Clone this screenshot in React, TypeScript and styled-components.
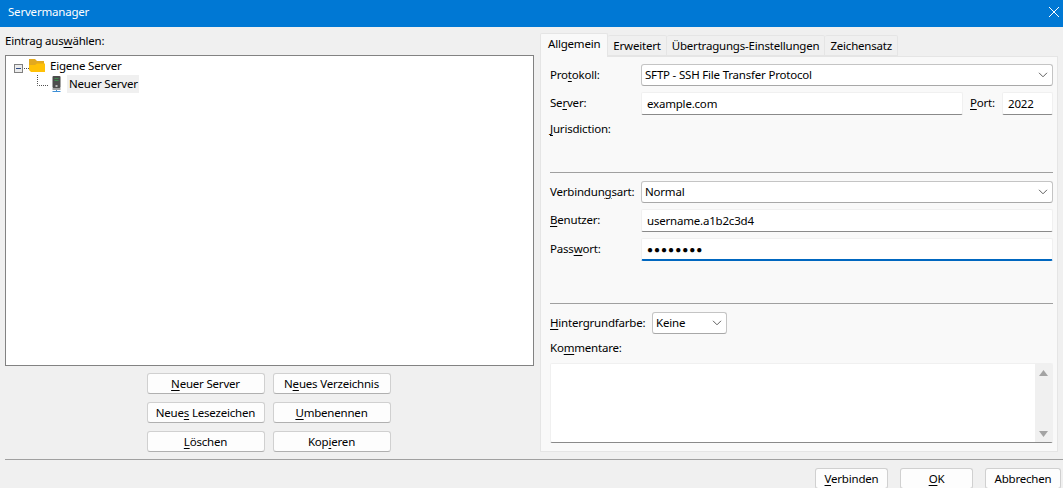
import React from 'react'
import styled, { createGlobalStyle } from 'styled-components'

const GlobalStyle = createGlobalStyle`
  html, body {
    margin: 0;
    padding: 0;
    background: #f0f0f0;
  }
  body {
    font-family: "Noto Sans", "Open Sans", "Liberation Sans", sans-serif;
    font-size: 11.5px;
    letter-spacing: -0.2px;
    color: #000;
  }
`

const Window = styled.div`
  width: 1063px;
  height: 488px;
  overflow: hidden;
  display: flex;
  flex-direction: column;
  background: #f0f0f0;
`

const TitleBar = styled.div`
  flex: none;
  height: 27px;
  box-sizing: border-box;
  background: #0078d4;
  color: #fff;
  display: flex;
  align-items: center;
  justify-content: space-between;
  padding: 0 3px 4px 8px;
`

const Main = styled.div`
  flex: none;
  height: 432px;
  display: flex;
  padding-left: 5px;
`

const LeftColumn = styled.div`
  width: 529px;
  display: flex;
  flex-direction: column;
`

const TopLabel = styled.div`
  height: 28px;
  line-height: 28px;
`

const Tree = styled.div`
  height: 311px;
  box-sizing: border-box;
  border: 1px solid #828282;
  background: #fff;
  padding: 1px 0 0 8px;
`

const TreeRow = styled.div<{ $indent?: number }>`
  display: flex;
  align-items: center;
  height: 18px;
  padding-left: ${p => p.$indent ?? 0}px;
`

const TreeText = styled.span<{ $selected?: boolean }>`
  padding: 0 1px 0 2px;
  margin-left: ${p => (p.$selected ? 5 : 2)}px;
  height: 18px;
  line-height: 18px;
  background: ${p => (p.$selected ? '#f0f0f0' : 'transparent')};
`

const ButtonGrid = styled.div`
  display: grid;
  grid-template-columns: 118px 118px;
  grid-auto-rows: 21px;
  gap: 8px;
  justify-content: center;
  margin-top: 7px;
  padding-right: 2px;
`

const Button = styled.div<{ $width?: number }>`
  box-sizing: border-box;
  width: ${p => (p.$width ? `${p.$width}px` : 'auto')};
  height: 21px;
  background: #fdfdfd;
  border: 1px solid #d0d0d0;
  border-bottom-color: #b0b0b0;
  border-radius: 3px;
  display: flex;
  align-items: center;
  justify-content: center;
  white-space: nowrap;
`

const RightColumn = styled.div`
  width: 518px;
  margin-left: 6px;
  display: flex;
  flex-direction: column;
  padding-top: 6px;
`

const TabBar = styled.div`
  display: flex;
  align-items: flex-end;
  height: 23px;
`

const Tab = styled.div<{ $active?: boolean }>`
  box-sizing: border-box;
  height: ${p => (p.$active ? 24 : 21)}px;
  margin-bottom: ${p => (p.$active ? -1 : 0)}px;
  padding: 0 ${p => (p.$active ? 7 : 5)}px ${p => (p.$active ? 4 : 0)}px;
  display: flex;
  align-items: center;
  white-space: nowrap;
  position: relative;
  background: ${p => (p.$active ? '#f9f9f9' : '#f0f0f0')};
  border: 1px solid #e5e5e5;
  border-bottom: ${p => (p.$active ? 'none' : '1px solid #e5e5e5')};
  border-left-width: ${p => (p.$active ? 1 : 0)}px;
  border-radius: 2px 2px 0 0;
`

const TabPanel = styled.div`
  height: 396px;
  box-sizing: border-box;
  background: #f9f9f9;
  border: 1px solid #e5e5e5;
  padding: 7px 4px 0 9px;
  display: flex;
  flex-direction: column;
`

const FormRow = styled.div<{ $top?: number }>`
  display: flex;
  align-items: center;
  margin-top: ${p => p.$top ?? 0}px;
`

const FieldLabel = styled.div<{ $width?: number }>`
  flex: none;
  box-sizing: border-box;
  width: ${p => p.$width ?? 91}px;
  padding-bottom: 2px;
  white-space: nowrap;
`

const Select = styled.div<{ $width?: number }>`
  box-sizing: border-box;
  flex: ${p => (p.$width ? 'none' : '1')};
  width: ${p => (p.$width ? `${p.$width}px` : 'auto')};
  height: 22px;
  background: #fff;
  border: 1px solid #c4c4c4;
  border-bottom-color: #a8a8a8;
  border-radius: 3px;
  display: flex;
  align-items: center;
  justify-content: space-between;
  padding: 0 4px 1px 3px;
`

const Input = styled.div<{ $width?: number; $focused?: boolean }>`
  box-sizing: border-box;
  flex: ${p => (p.$width ? 'none' : '1')};
  width: ${p => (p.$width ? `${p.$width}px` : 'auto')};
  height: 23px;
  background: #fff;
  border: 1px solid #f0f0f0;
  border-bottom: ${p => (p.$focused ? '2px solid #0067c0' : '1px solid #8a8a8a')};
  border-radius: 2px;
  display: flex;
  align-items: center;
  padding: 0 5px 1px;
`

const Dots = styled.span`
  font-size: 10px;
  letter-spacing: 1px;
`

const PortLabel = styled.div`
  flex: none;
  width: 39px;
  padding: 0 0 2px 7px;
  box-sizing: border-box;
`

const Divider = styled.div<{ $top: number }>`
  flex: none;
  height: 1px;
  background: #a0a0a0;
  margin-top: ${p => p.$top}px;
`

const PlainLabel = styled.div<{ $top: number }>`
  margin-top: ${p => p.$top}px;
  height: 16px;
  line-height: 16px;
`

const Comments = styled.div`
  margin-top: 7px;
  height: 80px;
  box-sizing: border-box;
  background: #fff;
  border: 1px solid #f0f0f0;
  border-bottom: 1px solid #8a8a8a;
  border-radius: 2px;
  display: flex;
  justify-content: flex-end;
  padding: 0;
`

const ScrollTrack = styled.div`
  width: 17px;
  background: #f0f0f0;
  display: flex;
  flex-direction: column;
  justify-content: space-between;
  align-items: center;
  padding: 6px 0 5px;
  box-sizing: border-box;
`

const BottomLine = styled.div`
  flex: none;
  height: 1px;
  margin-left: 5px;
  background: #a0a0a0;
`

const Footer = styled.div`
  flex: none;
  display: flex;
  justify-content: flex-end;
  gap: 12px;
  padding: 8px 2px 0 0;
`

const Mn = styled.span`
  text-decoration: underline;
  text-underline-offset: 2px;
`

const Chevron = () => (
  <svg width="10" height="6" viewBox="0 0 10 6" fill="none" stroke="#606060" strokeWidth="1">
    <path d="M1 0.8 L5 4.8 L9 0.8" />
  </svg>
)

const CloseIcon = () => (
  <svg width="12" height="12" viewBox="0 0 12 12" fill="none" stroke="#fff" strokeWidth="1">
    <path d="M1 1 L11 11 M11 1 L1 11" />
  </svg>
)

const Expander = () => (
  <svg width="15" height="18" viewBox="0 0 15 18">
    <rect x="0.5" y="7.5" width="8" height="8" fill="#ececec" stroke="#808080" />
    <path d="M2 11.5 H7" stroke="#2f4c86" />
    <path d="M10 11.5 H15" stroke="#505050" strokeDasharray="1 1" />
  </svg>
)

const FolderIcon = () => (
  <svg width="17" height="18" viewBox="0 0 17 18">
    <path d="M0 2 H6 L8 4 H15 V9 H0 Z" fill="#e2a91f" />
    <path d="M0 8 H6 L8 6.5 H16 V15 H2 L0 13 Z" fill="#ffc107" />
  </svg>
)

const TreeConnector = () => (
  <svg width="14" height="18" viewBox="0 0 14 18">
    <path d="M0.5 0 V10.5 H11" fill="none" stroke="#505050" strokeDasharray="1 1" />
  </svg>
)

const ServerIcon = () => (
  <svg width="11" height="18" viewBox="0 0 11 18">
    <rect x="1.5" y="1" width="8" height="12" rx="1" fill="#4d4d4d" />
    <rect x="3.5" y="3" width="4" height="1" fill="#3f8a4e" />
    <rect x="3.5" y="5" width="4" height="1" fill="#3f8a4e" />
    <rect x="4.5" y="10" width="2" height="2" fill="#b8b8b8" />
    <rect x="1.5" y="13" width="8" height="2" fill="#a0a0a0" />
    <path d="M5.5 15 V17 M1.5 16.5 H9.5" stroke="#3d8fd6" strokeWidth="1" />
  </svg>
)

const Arrow = ({ up }: { up?: boolean }) => (
  <svg width="9" height="6" viewBox="0 0 9 6">
    <path d={up ? 'M4.5 0 L9 6 H0 Z' : 'M0 0 H9 L4.5 6 Z'} fill="#a3a3a3" />
  </svg>
)

const App: React.FC = () => {
  return (
    <Window>
      <GlobalStyle />
      <TitleBar>
        <span>Servermanager</span>
        <CloseIcon />
      </TitleBar>
      <Main>
        <LeftColumn>
          <TopLabel>
            Eintrag aus<Mn>w</Mn>ählen:
          </TopLabel>
          <Tree>
            <TreeRow>
              <Expander />
              <FolderIcon />
              <TreeText>Eigene Server</TreeText>
            </TreeRow>
            <TreeRow $indent={23}>
              <TreeConnector />
              <ServerIcon />
              <TreeText $selected>Neuer Server</TreeText>
            </TreeRow>
          </Tree>
          <ButtonGrid>
            <Button>
              <span><Mn>N</Mn>euer Server</span>
            </Button>
            <Button>
              <span>N<Mn>e</Mn>ues Verzeichnis</span>
            </Button>
            <Button>
              <span>Neue<Mn>s</Mn> Lesezeichen</span>
            </Button>
            <Button>
              <span><Mn>U</Mn>mbenennen</span>
            </Button>
            <Button>
              <span><Mn>L</Mn>öschen</span>
            </Button>
            <Button>
              <span>Kop<Mn>i</Mn>eren</span>
            </Button>
          </ButtonGrid>
        </LeftColumn>
        <RightColumn>
          <TabBar>
            <Tab $active>Allgemein</Tab>
            <Tab>Erweitert</Tab>
            <Tab>Übertragungs-Einstellungen</Tab>
            <Tab>Zeichensatz</Tab>
          </TabBar>
          <TabPanel>
            <FormRow>
              <FieldLabel>Pro<Mn>t</Mn>okoll:</FieldLabel>
              <Select>
                <span>SFTP - SSH File Transfer Protocol</span>
                <Chevron />
              </Select>
            </FormRow>
            <FormRow $top={6}>
              <FieldLabel>Se<Mn>r</Mn>ver:</FieldLabel>
              <Input>example.com</Input>
              <PortLabel><Mn>P</Mn>ort:</PortLabel>
              <Input $width={51}>2022</Input>
            </FormRow>
            <PlainLabel $top={6}>
              <Mn>J</Mn>urisdiction:
            </PlainLabel>
            <Divider $top={35} />
            <FormRow $top={8}>
              <FieldLabel>Verbindun<Mn>g</Mn>sart:</FieldLabel>
              <Select>
                <span>Normal</span>
                <Chevron />
              </Select>
            </FormRow>
            <FormRow $top={6}>
              <FieldLabel><Mn>B</Mn>enutzer:</FieldLabel>
              <Input>username.a1b2c3d4</Input>
            </FormRow>
            <FormRow $top={6}>
              <FieldLabel>Pass<Mn>w</Mn>ort:</FieldLabel>
              <Input $focused><Dots>●●●●●●●●</Dots></Input>
            </FormRow>
            <Divider $top={42} />
            <FormRow $top={8}>
              <FieldLabel $width={102}><Mn>H</Mn>intergrundfarbe:</FieldLabel>
              <Select $width={75}>
                <span>Keine</span>
                <Chevron />
              </Select>
            </FormRow>
            <PlainLabel $top={6}>
              Ko<Mn>m</Mn>mentare:
            </PlainLabel>
            <Comments>
              <ScrollTrack>
                <Arrow up />
                <Arrow />
              </ScrollTrack>
            </Comments>
          </TabPanel>
        </RightColumn>
      </Main>
      <BottomLine />
      <Footer>
        <Button $width={73}>
          <span><Mn>V</Mn>erbinden</span>
        </Button>
        <Button $width={73}>
          <span><Mn>O</Mn>K</span>
        </Button>
        <Button $width={76}>
          <span>Abbrechen</span>
        </Button>
      </Footer>
    </Window>
  )
}

export default App
